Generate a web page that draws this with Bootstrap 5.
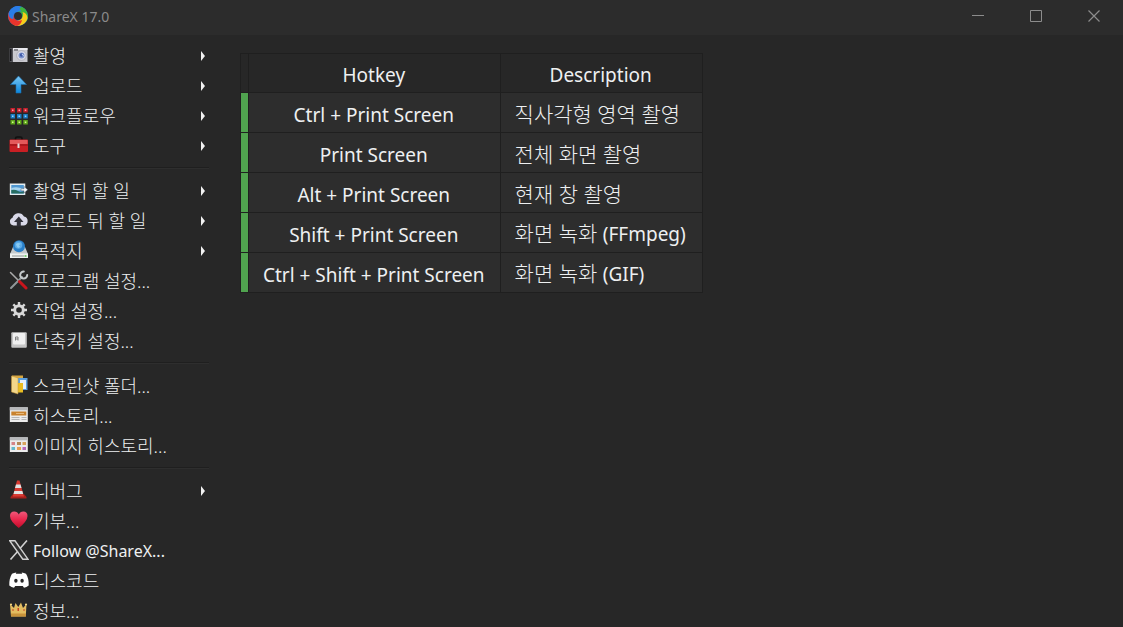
<!DOCTYPE html>
<html lang="ko" data-bs-theme="dark">
<head>
<meta charset="utf-8">
<meta name="viewport" content="width=device-width, initial-scale=1">
<title>ShareX 17.0</title>
<link href="https://cdn.jsdelivr.net/npm/bootstrap@5.3.0/dist/css/bootstrap.min.css" rel="stylesheet">
<style>
  body { background: #272727; color: #eef0f1; font-family: "Noto Sans", "Noto Sans CJK KR", sans-serif; }
  .titlebar { background: #2c2c2c; height: 35px; padding: 0 0 3px 8px; color: #8a8a8a; font-size: 14px; }
  .win-btn { width: 58px; height: 32px; color: #8c8c8c; background: none; }
  .win-btn svg { display: block; margin: 0 auto; }
  .side { width: 218px; padding: 6px 9px 0; }
  .menu-row { height: 30px; gap: 4px; background: none; color: inherit; font-size: 18px; font-weight: 300; line-height: 30px; text-decoration: none; }
  .menu-row:hover { background: #333; }
  .menu-row svg.ico { width: 20px; height: 20px; margin-bottom: 2px; flex: none; }
  .has-sub::after { content: ""; margin-left: auto; margin-right: 4px; border: 5px solid transparent; border-left: 4px solid #f2f2f2; border-right: 0; }
  .sep { height: 15px; padding-top: 6px; }
  .sep::before { content: ""; display: block; height: 2px; background: #1f1f1f; border-bottom: 1px solid #2e2e2e; }
  .latin { font-family: "Noto Sans", sans-serif; font-size: 16px; font-weight: 400; }
  .pane { padding: 18px 22px; }
  .keys { border-collapse: collapse; font-size: 21px; font-weight: 300; line-height: 28px; }
  .keys th, .keys td { border: 1px solid #1f1f1f; height: 40px; padding: 4px 16px 2px 14px; }
  .keys th, .keys .combo, .keys .en { font-size: 19px; font-weight: 400; text-align: center; }
  .keys th { height: 39px; }
  .keys th, .keys .combo { padding: 5px 15px 1px 14px; }
  .keys td { background: #2d2d2d; }
  .keys .mark-cell { width: 8px; padding: 0; }
  .keys td.mark-cell { background: #50a34f; }
</style>
</head>
<body>
<header class="titlebar d-flex align-items-center">
  <svg width="20" height="20" viewBox="0 0 20 20" aria-hidden="true">
    <circle cx="10" cy="10" r="10" fill="#2a7de8"/>
    <path d="M10 0A10 10 0 0 1 20 10Q20 13 18.500 15.500 17 14 14 12 15 6 9 5 9 2 14 1Z" fill="#3fb53b"/>
    <path d="M19.500 12A10 10 0 0 1 7 19.500Q4 18 5 14 10 17 14 12 16 9 14.500 6 19 7 19.500 12Z" fill="#f7cc1a"/>
    <path d="M9 20A10 10 0 0 1 1 6Q3 4 6 5.500 4 10 8 14 11 15.500 14 14 13 19 9 20Z" fill="#e8342c"/>
    <path d="M.5 8A10 10 0 0 1 13 .5Q10 2 13.500 5.500 9 4 6.500 7 5 9 5.500 13 1 13 .5 8Z" fill="#2a7de8"/>
    <circle cx="10" cy="10" r="4" fill="#2c2c2c"/>
  </svg>
  <span class="ms-1">ShareX 17.0</span>
  <div class="d-flex ms-auto">
    <button class="win-btn border-0 p-0" aria-label="최소화"><svg width="12" height="12" stroke="currentColor" fill="none"><path d="M0 5.500H12"/></svg></button>
    <button class="win-btn border-0 p-0" aria-label="최대화"><svg width="12" height="12" stroke="currentColor" fill="none"><path d="M.5.5h11v11H.5z"/></svg></button>
    <button class="win-btn border-0 p-0" aria-label="닫기"><svg width="12" height="12" stroke="currentColor" stroke-width="1.200" fill="none"><path d="M.5.5l11 11M11.500.5l-11 11"/></svg></button>
  </div>
</header>

<div class="d-flex align-items-start">
  <nav class="side d-flex flex-column flex-shrink-0" aria-label="ShareX">
    <button class="menu-row has-sub border-0 p-0 d-flex align-items-center w-100">
      <svg class="ico" viewBox="0 0 20 20"><path d="M1 3h17.500v14H1z" fill="#c9c9cf"/><path d="M.5 3H4v14H.5z" fill="#55555a"/><path d="M1 4h1.500v12H1z" fill="#16161a"/><path d="M4 3h14.500v2H4z" fill="#e9e9ee"/><path d="M5 4h4v2H5z" fill="#88888e"/><circle cx="12.500" cy="10.500" r="4.800" fill="#dcdce8" stroke="#a4a4ae" stroke-width=".7"/><circle cx="12.500" cy="10.500" r="3" fill="#7f95cc"/><circle cx="12.500" cy="10" r="1.700" fill="#3f58a8"/><path d="M13 9l1.500 2" stroke="#cfe0ff"/></svg>
      촬영</button>
    <button class="menu-row has-sub border-0 p-0 d-flex align-items-center w-100">
      <svg class="ico" viewBox="0 0 20 20"><defs><linearGradient id="up" x2="0" y2="1"><stop stop-color="#7cc8f5"/><stop offset="1" stop-color="#0a86dd"/></linearGradient></defs><path d="M9.500 1L17.500 9.500H12V18H7V9.500H1.500Z" fill="url(#up)" stroke="#1b6fae" stroke-width=".6"/></svg>
      업로드</button>
    <button class="menu-row has-sub border-0 p-0 d-flex align-items-center w-100">
      <svg class="ico" viewBox="0 0 20 20"><g fill="#c3202c"><path d="M1.500 3h4.500v4.500H1.500zM8 3h4.500v4.500H8zM14.300 3h4.500v4.500h-4.500z"/></g><g fill="#1c7dc4"><path d="M1.500 9h4.500v4.500H1.500zM8 9h4.500v4.500H8zM14.300 9h4.500v4.500h-4.500z"/></g><g fill="#5fa51c"><path d="M1.500 15h4.500v4.500H1.500zM8 15h4.500v4.500H8zM14.300 15h4.500v4.500h-4.500z"/></g><path d="M3 5.200h1.500m5 0H11m4.800 0h1.500" stroke="#ffa0a4" stroke-width="1.600"/><path d="M3 11.200h1.500m5 0H11m4.800 0h1.500" stroke="#8fd6ff" stroke-width="1.600"/><path d="M3 17.200h1.500m5 0H11m4.800 0h1.500" stroke="#d3ff8c" stroke-width="1.600"/></svg>
      워크플로우</button>
    <button class="menu-row has-sub border-0 p-0 d-flex align-items-center w-100">
      <svg class="ico" viewBox="0 0 20 20"><path d="M6.500 5V3.500Q6.500 2 8 2h3.500Q13 2 13 3.500V5" fill="none" stroke="#111" stroke-width="1.600"/><rect x=".5" y="4.500" width="18.500" height="12.500" rx="1" fill="#c81f24"/><path d="M1 5h17.500v4H1z" fill="#e4595a"/><path d="M.5 10h18.500" stroke="#8e1014"/><path d="M8.500 8.500h2v4.500h-2z" fill="#e8d8d8"/></svg>
      도구</button>

    <div class="sep"></div>

    <button class="menu-row has-sub border-0 p-0 d-flex align-items-center w-100">
      <svg class="ico" viewBox="0 0 20 20"><path d="M.8 3.500h15.500v11.500H.8z" fill="#e4ecef"/><path d="M2.300 5h12.500v8.500H2.300z" fill="#4f97d0"/><path d="M2.300 8Q8 6 14.800 9v1.500H2.300z" fill="#a9d5ee"/><path d="M2.300 10Q6 9 9 11t5.800 0v2.500H2.300z" fill="#276d62"/><path d="M12 8.800h3V6.500l3.800 3.300L15 13v-2.200h-3z" fill="#f5f7f8" stroke="#345" stroke-width=".4"/></svg>
      촬영 뒤 할 일</button>
    <button class="menu-row has-sub border-0 p-0 d-flex align-items-center w-100">
      <svg class="ico" viewBox="0 0 20 20"><path d="M4.500 15.500A4 4 0 0 1 3.500 7.800 6.200 6.200 0 0 1 15 6.500 4.600 4.600 0 0 1 15 15.500Z" fill="#d9d9e8"/><path d="M9.800 6.500L14.500 12H11.800v4.500h-4V12H5Z" fill="#303038"/></svg>
      업로드 뒤 할 일</button>
    <button class="menu-row has-sub border-0 p-0 d-flex align-items-center w-100">
      <svg class="ico" viewBox="0 0 20 20"><path d="M4 7h12l3 7v3.500H1V14z" fill="#c4c9cb"/><path d="M1 13.500h18V18H1z" fill="#edf0ef"/><path d="M3 16h12" stroke="#8d9492"/><path d="M15.500 16h2" stroke="#45bd42" stroke-width="1.400"/><circle cx="10" cy="6.300" r="6" fill="#297fc8"/><circle cx="9.500" cy="5" r="3.800" fill="#5aa9e6"/><path d="M7 4Q9 2 12 4L10 5 11 7 9 8 7.500 6z" fill="#8acbf4"/></svg>
      목적지</button>
    <button class="menu-row border-0 p-0 d-flex align-items-center w-100">
      <svg class="ico" viewBox="0 0 20 20" fill="none" stroke-linecap="round"><path d="M1.500 2.500L10 11" stroke="#aaa" stroke-width="1.500"/><path d="M2 18L13 7" stroke="#8f9698" stroke-width="2"/><path d="M10.500 11.500L17 18" stroke="#c9151c" stroke-width="3"/><path d="M14.800 1.500A3.500 3.500 0 1 0 18.200 5" stroke="#c5cacc" stroke-width="2"/></svg>
      프로그램 설정...</button>
    <button class="menu-row border-0 p-0 d-flex align-items-center w-100">
      <svg class="ico" viewBox="0 0 20 20"><g stroke="#d8d8d8" fill="none"><circle cx="10" cy="10" r="4.300" stroke-width="3"/><path d="M10 2v3M10 15v3M2 10h3M15 10h3M4.300 4.300l2.200 2.200M13.500 13.500l2.200 2.200M15.700 4.300l-2.200 2.200M6.500 13.500l-2.200 2.200" stroke-width="2.400"/></g></svg>
      작업 설정...</button>
    <button class="menu-row border-0 p-0 d-flex align-items-center w-100">
      <svg class="ico" viewBox="0 0 20 20"><rect x="2.300" y="2.300" width="15.500" height="15.500" rx="1" fill="#c6c6c6"/><rect x="4" y="3" width="12" height="11.500" rx="1" fill="#f0f0f0"/><path d="M6.500 10.500V7h2.500v3.500M6.500 9h2.500" fill="none" stroke="#777" stroke-width=".9"/></svg>
      단축키 설정...</button>

    <div class="sep"></div>

    <button class="menu-row border-0 p-0 d-flex align-items-center w-100">
      <svg class="ico" viewBox="0 0 20 20"><path d="M3 .5h11v4H3z" fill="#d6a640"/><path d="M8 3h10.500v12H8z" fill="#5b9fdf"/><path d="M11 5h6v9h-6z" fill="#e5f1fa"/><path d="M7.500 8H14v9.500H7.500z" fill="#e9bd22"/><path d="M2.500 1L9 3v16L2.500 17z" fill="#f2d68a" stroke="#c79536" stroke-width=".5"/></svg>
      스크린샷 폴더...</button>
    <button class="menu-row border-0 p-0 d-flex align-items-center w-100">
      <svg class="ico" viewBox="0 0 20 20"><path d="M.8 2.300h18V17H.8z" fill="#ececec"/><path d="M.8 2.300h18v3H.8z" fill="#b6b8ba"/><path d="M2.300 6.500h15v4h-15z" fill="#c9822d"/><path d="M7 8.500h8" stroke="#e7b878"/><path d="M2.500 12.500h8m2 0h5m-15 2h8m2 0h5" stroke="#b5b5b5"/></svg>
      히스토리...</button>
    <button class="menu-row border-0 p-0 d-flex align-items-center w-100">
      <svg class="ico" viewBox="0 0 20 20"><path d="M.8 2.300h18V17H.8z" fill="#ececec"/><path d="M.8 2.300h18v3H.8z" fill="#b6b8ba"/><path d="M2.500 7h3.500v3H2.500z" fill="#d58488"/><path d="M8 7h4v3H8z" fill="#b58857"/><path d="M13.500 7H17v3h-3.500z" fill="#d9a45c"/><path d="M2.500 12h3.500v3H2.500z" fill="#64b8cb"/><path d="M8 12h4v3H8z" fill="#e6a052"/><path d="M13.500 12H17v3h-3.500z" fill="#b968b8"/></svg>
      이미지 히스토리...</button>

    <div class="sep"></div>

    <button class="menu-row has-sub border-0 p-0 d-flex align-items-center w-100">
      <svg class="ico" viewBox="0 0 20 20"><path d="M1.500 17l2-2.500h12l2 2.500v1.500h-16z" fill="#a8201c"/><path d="M8 .5h2.500l4.500 16H3.800z" fill="#d83a32"/><path d="M7 4.500h4.500l1 3.500H6zM5.300 11h8l.9 3H4.500z" fill="#dfe3e3"/></svg>
      디버그</button>
    <button class="menu-row border-0 p-0 d-flex align-items-center w-100">
      <svg class="ico" viewBox="0 0 20 20"><defs><linearGradient id="heart" x2="0" y2="1"><stop stop-color="#f0587a"/><stop offset=".5" stop-color="#e8274c"/><stop offset="1" stop-color="#c00c2a"/></linearGradient></defs><path d="M9.800 18Q1 11 1 6 1 1.500 5.200 1.500 8.500 1.500 9.800 4.500 11 1.500 14.300 1.500 18.500 1.500 18.500 6 18.500 11 9.800 18Z" fill="url(#heart)"/></svg>
      기부...</button>
    <a href="#" class="menu-row d-flex align-items-center w-100">
      <svg class="ico" viewBox="0 0 20 20"><path d="M.8.8H6L19 19.200h-5.200Z" fill="#333" stroke="#d0d0d0" stroke-width="1.400"/><path d="M18 .5L11 8.600M8.800 11.200L1.500 19.500" stroke="#d0d0d0" stroke-width="1.600"/></svg>
      <span class="latin">Follow @ShareX...</span></a>
    <a href="#" class="menu-row d-flex align-items-center w-100">
      <svg class="ico" viewBox="0 0 20 20"><path d="M7.300 2.500L6.800 3.700h6.400l-.5-1.200Q15 2.700 17 3.800 20 8.500 19.700 15.500 17.500 17.300 15 17.800L13.800 16H6.200L5 17.800Q2.500 17.300.3 15.500 0 8.500 3 3.800 5 2.700 7.300 2.500Z" fill="#fff"/><ellipse cx="6.900" cy="10.800" rx="1.700" ry="2" fill="#272727"/><ellipse cx="13.100" cy="10.800" rx="1.700" ry="2" fill="#272727"/></svg>
      디스코드</a>
    <button class="menu-row border-0 p-0 d-flex align-items-center w-100">
      <svg class="ico" viewBox="0 0 20 20"><path d="M1 4l4 4 1.500-5L9.300 7l2.700-4.500L14 8l3.500-4-.7 12.500H2z" fill="#e3bc60"/><path d="M2 13.500h15v3H2z" fill="#c8923a"/><circle cx="2" cy="4.500" r="1.100" fill="#f5d784"/><circle cx="17" cy="4.500" r="1.100" fill="#f5d784"/><path d="M8.500 8h1.500v3H8.500zM3.500 9h1v2h-1zM14.500 9h1v2h-1z" fill="#c84522"/></svg>
      정보...</button>
  </nav>

  <main class="pane flex-grow-1">
    <table class="keys">
      <thead>
        <tr><th class="mark-cell" aria-label="상태"></th><th scope="col">Hotkey</th><th scope="col">Description</th></tr>
      </thead>
      <tbody>
        <tr><td class="mark-cell"></td><td class="combo">Ctrl + Print Screen</td><td>직사각형 영역 촬영</td></tr>
        <tr><td class="mark-cell"></td><td class="combo">Print Screen</td><td>전체 화면 촬영</td></tr>
        <tr><td class="mark-cell"></td><td class="combo">Alt + Print Screen</td><td>현재 창 촬영</td></tr>
        <tr><td class="mark-cell"></td><td class="combo">Shift + Print Screen</td><td>화면 녹화 <span class="en">(FFmpeg)</span></td></tr>
        <tr><td class="mark-cell"></td><td class="combo">Ctrl + Shift + Print Screen</td><td>화면 녹화 <span class="en">(GIF)</span></td></tr>
      </tbody>
    </table>
  </main>
</div>
<script src="https://cdn.jsdelivr.net/npm/bootstrap@5.3.0/dist/js/bootstrap.bundle.min.js"></script>
</body>
</html>
